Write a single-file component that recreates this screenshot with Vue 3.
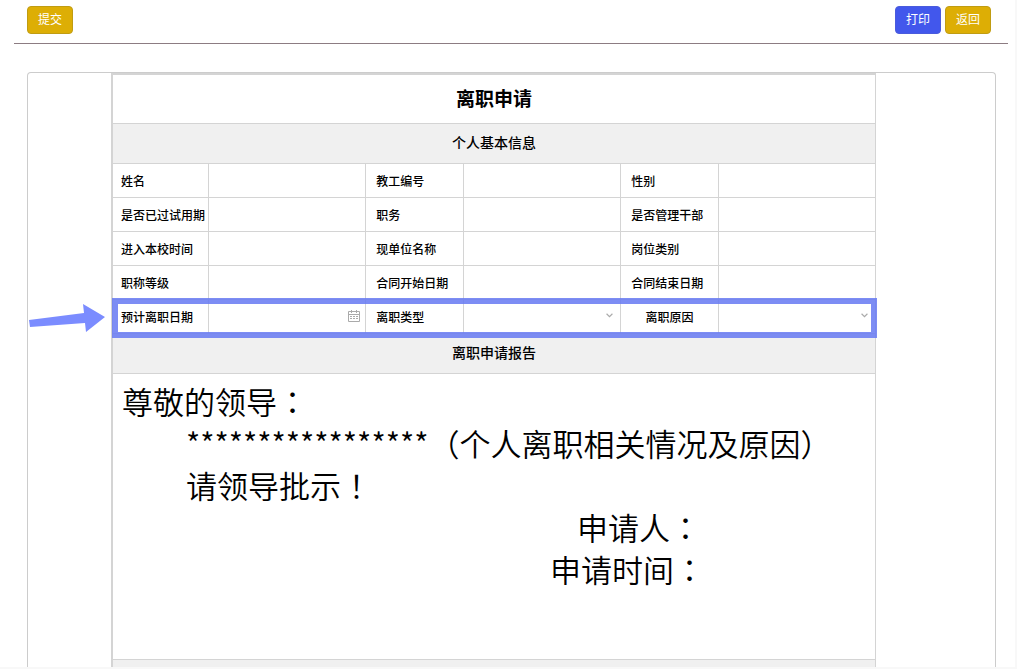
<script setup>
import { ref } from 'vue'

const infoRows = [
  ['姓名', '教工编号', '性别'],
  ['是否已过试用期', '职务', '是否管理干部'],
  ['进入本校时间', '现单位名称', '岗位类别'],
  ['职称等级', '合同开始日期', '合同结束日期'],
]
const leaveDate = ref('')
const leaveType = ref('')
const leaveReason = ref('')
</script>

<template>
  <div class="page">
    <header class="toolbar">
      <button type="button" class="btn gold">提交</button>
      <div class="right">
        <button type="button" class="btn blue">打印</button>
        <button type="button" class="btn gold">返回</button>
      </div>
    </header>

    <main class="panel">
      <div class="sheet">
        <table>
          <colgroup>
            <col class="col-first" />
            <col class="col-value" />
            <col class="col-label" />
            <col class="col-value" />
            <col class="col-label" />
            <col class="col-value" />
          </colgroup>
          <tbody>
            <tr class="title"><th colspan="6"><h1>离职申请</h1></th></tr>
            <tr class="section"><th colspan="6">个人基本信息</th></tr>
            <tr v-for="row in infoRows" :key="row[0]" class="row">
              <template v-for="label in row" :key="label">
                <th scope="row">{{ label }}</th>
                <td></td>
              </template>
            </tr>
            <tr class="row marked">
              <th scope="row"><label for="leave-date">预计离职日期</label></th>
              <td>
                <div class="field">
                  <input id="leave-date" v-model="leaveDate" type="text" />
                  <svg class="calendar" viewBox="0 0 12 12" aria-hidden="true">
                    <path d="M.5 1.5h11v10H.5zM.5 4.5h11M3.5 0v3M8.5 0v3M2 6.5h2M5 6.5h2M8 6.5h2M2 8.5h2M5 8.5h2M8 8.5h2" />
                  </svg>
                </div>
              </td>
              <th scope="row"><label for="leave-type">离职类型</label></th>
              <td>
                <div class="field wide">
                  <select id="leave-type" v-model="leaveType"><option value=""></option></select>
                  <svg class="chevron" viewBox="0 0 6 4" aria-hidden="true"><path d="M.5.5 3 3 5.5.5" /></svg>
                </div>
              </td>
              <th scope="row" class="centered"><label for="leave-reason">离职原因</label></th>
              <td>
                <div class="field wide">
                  <select id="leave-reason" v-model="leaveReason"><option value=""></option></select>
                  <svg class="chevron" viewBox="0 0 6 4" aria-hidden="true"><path d="M.5.5 3 3 5.5.5" /></svg>
                </div>
                <span class="frame"></span>
                <svg class="arrow" viewBox="0 0 78 30" aria-hidden="true">
                  <path d="M1 17 56 10 55 1 77 14 58 29 57 20 2 24Z" />
                </svg>
              </td>
            </tr>
            <tr class="section"><th colspan="6">离职申请报告</th></tr>
            <tr>
              <td colspan="6" class="report">
                <p>尊敬的领导<span class="mid">：</span></p>
                <p class="indent">*****************（个人离职相关情况及原因）</p>
                <p class="indent">请领导批示<span class="mid">！</span></p>
                <p class="applicant">申请人<span class="mid">：</span></p>
                <p class="apply-time">申请时间<span class="mid">：</span></p>
              </td>
            </tr>
            <tr class="next"><th colspan="6"></th></tr>
          </tbody>
        </table>
      </div>
    </main>
  </div>
</template>

<style>
body {
  background: #fff;
}
</style>

<style scoped>
.page {
  padding-bottom: 2px;
  border-right: 2px solid #f8f8f8;
  background: linear-gradient(#f8f8f8, #f8f8f8) bottom / 100% 2px no-repeat;
  font-family: "Noto Sans CJK SC", sans-serif;
  font-size: 12px;
  color: #000;
}
.toolbar {
  display: flex;
  justify-content: space-between;
  margin: 0 7px 0 14px;
  padding: 6px 17px 9px 13px;
  border-bottom: 1px solid #8c7c82;
}
.right {
  display: flex;
  gap: 4px;
}
.btn {
  box-sizing: border-box;
  width: 46px;
  height: 28px;
  padding: 0 0 2px;
  border: 1px solid;
  border-radius: 4px;
  font: 12px/24px "Noto Sans CJK SC", sans-serif;
  color: #fff;
}
.gold {
  background: #ddae05;
  border-color: #c09c12;
}
.blue {
  background: #4257ec;
  border-color: #4a5bdc;
}
.panel {
  margin: 28px 19px 0 27px;
  padding: 0 119px 0 83px;
  border: 1px solid #ccc;
  border-bottom: 0;
  border-radius: 4px 4px 0 0;
}
.sheet {
  border-top: 1px solid #d4d4d4;
  border-left: 1px solid #d4d4d4;
}
table {
  width: 100%;
  table-layout: fixed;
  border-collapse: collapse;
}
.col-first {
  width: 12.6%;
}
.col-label {
  width: 12.8%;
}
.col-value {
  width: 20.6%;
}
th,
td {
  padding: 0;
  border: 1px solid #d4d4d4;
  font-weight: 500;
}
h1 {
  margin: 0;
  padding-bottom: 2px;
  font-size: 19px;
  line-height: 46px;
  font-weight: 700;
}
.section th {
  height: 36px;
  padding-bottom: 3px;
  background: #f0f0f0;
  font-size: 14px;
  line-height: 20px;
}
.row th {
  height: 33px;
  padding-left: 8px;
  text-align: left;
  line-height: 18px;
  white-space: nowrap;
}
.row td + th {
  padding-left: 10px;
}
.row td + .centered {
  padding-left: 0;
  text-align: center;
}
.marked {
  position: relative;
}
.field {
  display: flex;
  align-items: center;
  padding: 0 5px 2px 0;
}
.wide {
  padding-right: 7px;
}
.field input,
.field select {
  flex: 1;
  min-width: 0;
  height: 24px;
  padding: 0 6px;
  border: 0;
  outline: 0;
  appearance: none;
  background: transparent;
  font: inherit;
}
.field svg {
  flex: none;
  fill: none;
  stroke: #aaa;
}
.calendar {
  width: 12px;
  height: 12px;
}
.chevron {
  width: 7px;
  height: 5px;
}
.frame {
  position: absolute;
  inset: -2px -1px -4px -1px;
  border: 6px solid rgba(104, 122, 242, 0.86);
  pointer-events: none;
}
.arrow {
  position: absolute;
  left: -85px;
  top: 3px;
  width: 78px;
  height: 30px;
  fill: #7b8cff;
}
.report {
  height: 269px;
  padding: 6px 9px 10px;
  vertical-align: top;
  font-size: 31px;
  line-height: 42px;
  font-weight: 350;
}
.report p {
  margin: 0;
}
.mid {
  font-family: "Noto Sans CJK TC", sans-serif;
}
.report .indent {
  padding-left: 64px;
}
.report .applicant {
  padding-left: 455px;
}
.report .apply-time {
  padding-left: 428px;
}
.next th {
  height: 7px;
  border-bottom: 0;
  background: #f0f0f0;
}
</style>
